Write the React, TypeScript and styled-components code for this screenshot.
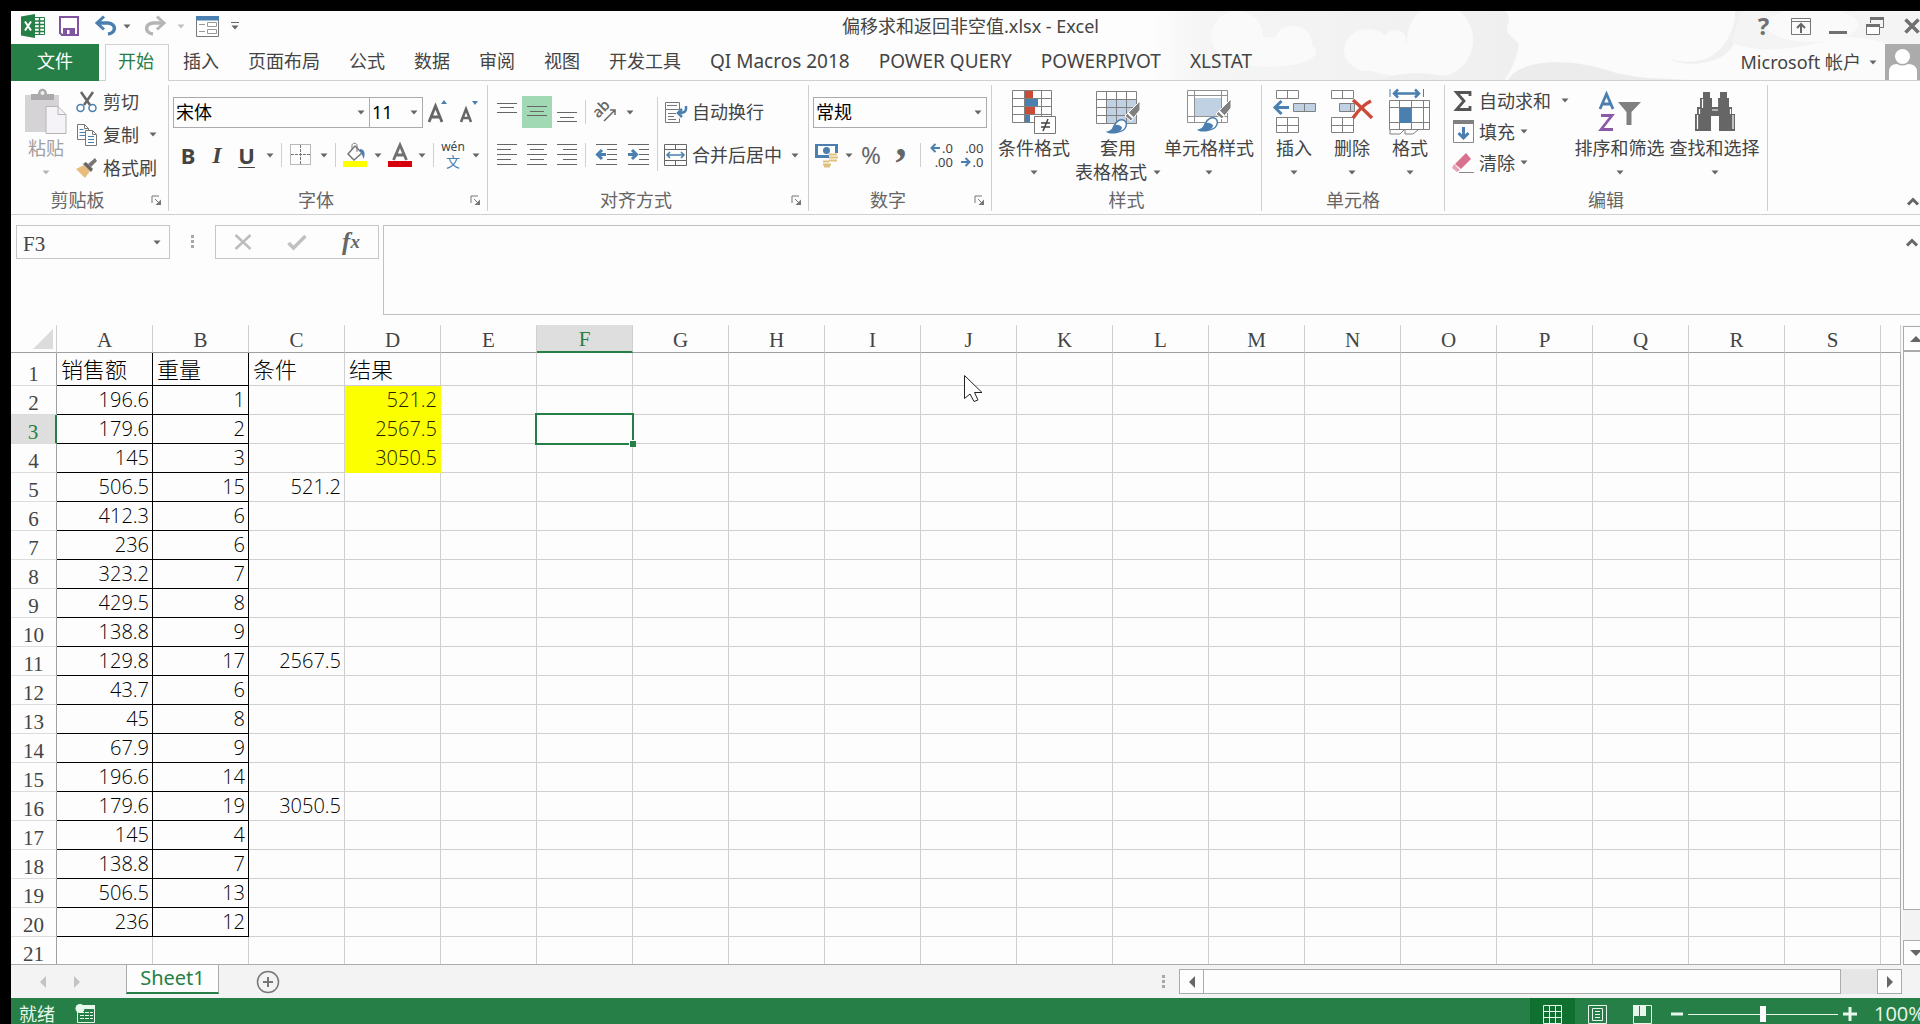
import React from 'react';
import styled, { createGlobalStyle, css } from 'styled-components';

const c = {
  green: '#267f46',
  greenDark: '#10702f',
  bg: '#fdfdfd',
  text: '#444444',
  label: '#666666',
  icon: '#707070',
  line: '#d0d0d0',
  box: '#ababab',
  blue: '#4a7fb0',
  pale: '#c0d1e4',
  red: '#cc4b37',
};
const uiFont = '"Noto Sans", "Noto Sans CJK SC", sans-serif';
const cellFont = '"Open Sans", "Noto Sans CJK SC", sans-serif';
const cellSerif = '"Liberation Serif", "Noto Sans CJK SC", serif';

const Global = createGlobalStyle`
  *, *::before, *::after { box-sizing: border-box; }
  body { margin: 0; background: #000; overflow: hidden; }
  button, input, select, textarea { font: inherit; color: inherit; }
`;

/* ---------- window ---------- */
const Screen = styled.div`
  height: 100vh;
  padding: 11px 0 0 11px;
  overflow: hidden;
  background: #000;
`;
const Window = styled.div`
  display: flex;
  flex-direction: column;
  width: calc(100% + 10px);
  height: calc(100% + 6px);
  background: ${c.bg};
  color: ${c.text};
  font: 18px/24px ${uiFont};
`;
const Plain = styled.button`
  display: flex;
  align-items: center;
  justify-content: center;
  padding: 0;
  border: 0;
  background: none;
  white-space: nowrap;
`;

/* ---------- header ---------- */
const Header = styled.header`
  position: relative;
  flex: none;
  isolation: isolate;
`;
const Art = styled.svg`
  position: absolute;
  top: 0;
  right: 0;
  z-index: -1;
`;
const TitleBar = styled.div`
  display: grid;
  grid-template-columns: 1fr auto 1fr;
  align-items: center;
  height: 33px;
  padding-bottom: 3px;
`;
const QuickBar = styled.div`
  display: flex;
  align-items: center;
  padding-left: 8px;
`;
const QuickButton = styled(Plain)<{ $w: number }>`
  width: ${(p) => p.$w}px;
  height: 30px;
`;
const Title = styled.h1`
  margin: 0;
  font: 18px/30px ${uiFont};
`;
const WindowControls = styled.div`
  display: flex;
  justify-content: flex-end;
`;
const WindowButton = styled(Plain)`
  width: 37px;
  height: 30px;
  color: ${c.icon};
  font-size: 24px;
  font-weight: 700;
`;
const TabBar = styled.nav`
  display: flex;
  height: 37px;
  border-bottom: 1px solid ${c.line};
`;
const FileTab = styled(Plain)`
  width: 88px;
  height: 37px;
  margin-right: 6px;
  padding-bottom: 4px;
  background: ${c.green};
  color: #fff;
`;
const Tab = styled(Plain)<{ $active?: boolean; $latin?: boolean }>`
  height: 37px;
  padding: 0 15px 4px 14px;
  font-size: ${(p) => (p.$latin ? 19 : 18)}px;
  ${(p) =>
    p.$active &&
    css`
      padding: 0 14px 4px 12px;
      background: ${c.bg};
      border: 1px solid ${c.line};
      border-bottom: 0;
      color: ${c.green};
    `}
`;
const Account = styled(Plain)`
  gap: 8px;
  margin-left: auto;
  margin-right: 9px;
`;
const Avatar = styled.span`
  display: flex;
  width: 36px;
  height: 36px;
  background: #ababab;
`;

/* ---------- ribbon ---------- */
const Ribbon = styled.div`
  display: flex;
  flex: none;
  height: 134px;
  padding: 4px 0 3px;
  border-bottom: 1px solid ${c.line};
`;
const GroupBox = styled.section<{ $w: number }>`
  display: flex;
  flex-direction: column;
  flex: none;
  width: ${(p) => p.$w}px;
  border-right: 1px solid ${c.line};
`;
const GroupBody = styled.div<{ $pad: number }>`
  display: flex;
  flex: 1;
  padding-left: ${(p) => p.$pad}px;
`;
const GroupFoot = styled.div`
  display: flex;
  align-items: center;
  height: 22px;
  color: ${c.label};
`;
const GroupName = styled.span`
  flex: 1;
  text-align: center;
`;
const LauncherButton = styled(Plain)`
  width: 24px;
  height: 20px;
`;
const Stack = styled.div<{ $w?: number }>`
  display: flex;
  flex-direction: column;
  width: ${(p) => (p.$w ? p.$w + 'px' : 'auto')};
`;
const TwoRows = styled.div`
  display: flex;
  flex-direction: column;
  gap: 11px;
  padding-top: 11px;
`;
const Row = styled.div`
  display: flex;
  align-items: center;
  height: 32px;
`;
const ToolButton = styled(Plain)<{ $w: number; $on?: boolean }>`
  flex: none;
  width: ${(p) => p.$w}px;
  height: 32px;
  background: ${(p) => (p.$on ? '#a0d9b4' : 'none')};
`;
const Letter = styled.span<{ $kind: 'b' | 'i' | 'u' | 'pct' | 'comma' }>`
  font-size: 22px;
  line-height: 24px;
  font-weight: 700;
  ${(p) => p.$kind === 'i' && css`font-family: "Liberation Serif", serif; font-style: italic; font-size: 24px;`}
  ${(p) => p.$kind === 'u' && css`text-decoration: underline; text-decoration-thickness: 1px; text-underline-offset: 3px;`}
  ${(p) => p.$kind === 'pct' && css`font-size: 24px; font-weight: 400; color: ${c.label};`}
  ${(p) => p.$kind === 'comma' && css`font-family: "Liberation Serif", serif; font-size: 44px; line-height: 12px; padding-bottom: 26px; color: ${c.label};`}
`;
const Divider = styled.span<{ $tall?: boolean }>`
  flex: none;
  width: 1px;
  height: ${(p) => (p.$tall ? 74 : 24)}px;
  margin: ${(p) => (p.$tall ? '12px 4px 0' : '0 4px 0 3px')};
  background: ${c.line};
`;
const Combo = styled.label<{ $w: number }>`
  position: relative;
  display: flex;
  align-items: center;
  width: ${(p) => p.$w}px;
  height: 31px;
  & + & { margin-left: -1px; }
  svg { position: absolute; right: 5px; pointer-events: none; }
`;
const ComboSelect = styled.select`
  appearance: none;
  width: 100%;
  height: 31px;
  padding: 0 2px;
  border: 1px solid ${c.box};
  border-radius: 0;
  background: ${c.bg};
  color: #000;
`;
const TextButton = styled(Plain)<{ $h: number; $gap?: number }>`
  justify-content: flex-start;
  gap: ${(p) => p.$gap ?? 3}px;
  height: ${(p) => p.$h}px;
`;
const IconSlot = styled.span<{ $w: number }>`
  display: flex;
  justify-content: center;
  width: ${(p) => p.$w}px;
`;
const CaretSlot = styled.span<{ $near?: boolean }>`
  display: flex;
  margin-left: ${(p) => (p.$near ? 2 : 7)}px;
`;
const BigBox = styled.button<{ $w: number; $dim?: boolean }>`
  display: flex;
  flex-direction: column;
  align-items: center;
  flex: none;
  width: ${(p) => p.$w}px;
  padding: 3px 0 0;
  border: 0;
  background: none;
  white-space: nowrap;
  color: ${(p) => (p.$dim ? '#a0a0a0' : 'inherit')};
`;
const BigIcon = styled.span`
  display: flex;
  align-items: center;
  height: 48px;
`;
const BigFoot = styled.span`
  display: flex;
  align-items: center;
  gap: 6px;
  height: 24px;
`;
const Pinyin = styled.span`
  display: flex;
  flex-direction: column;
  align-items: center;
  font-size: 12px;
  line-height: 14px;
`;
const PinyinHan = styled.span`
  font-size: 14px;
  line-height: 16px;
  color: ${c.blue};
`;
const Digits = styled.span`
  display: flex;
  flex-direction: column;
  width: 25px;
  font-size: 13px;
  line-height: 14px;
`;
const DigitRow = styled.span`
  display: flex;
  align-items: center;
  justify-content: flex-end;
  gap: 2px;
`;
const Collapse = styled(Plain)<{ $top?: boolean }>`
  align-self: ${(p) => (p.$top ? 'flex-start' : 'flex-end')};
  margin-left: auto;
  margin-top: ${(p) => (p.$top ? 6 : 0)}px;
  width: 35px;
  height: 20px;
`;

/* ---------- formula bar ---------- */
const FormulaBar = styled.div`
  display: flex;
  align-items: flex-start;
  flex: none;
  height: 110px;
  padding: 10px 0 0 5px;
`;
const NameBox = styled.label`
  position: relative;
  display: flex;
  align-items: center;
  width: 154px;
  svg { position: absolute; right: 9px; }
`;
const NameInput = styled.input`
  width: 100%;
  height: 34px;
  padding: 4px 6px 0;
  border: 1px solid #c6c6c6;
  background: ${c.bg};
  font: 21px/24px ${cellSerif};
`;
const Grip = styled.span<{ $margin: string }>`
  display: flex;
  flex-direction: column;
  gap: 2px;
  margin: ${(p) => p.$margin};
  &::before, &::after, i { content: ''; width: 3px; height: 3px; background: #a8a8a8; }
`;
const FormulaTools = styled.div`
  display: flex;
  width: 164px;
  height: 34px;
  margin-right: 4px;
  border: 1px solid #c6c6c6;
`;
const FormulaTool = styled(Plain)`
  flex: 1;
  font: italic 700 25px/24px "Liberation Serif", serif;
  color: ${c.label};
`;
const SmallX = styled.span`
  font-size: 19px;
`;
const FormulaField = styled.div`
  display: flex;
  flex: 1;
  height: 90px;
  border: 1px solid #c0c0c0;
`;
const FormulaInput = styled.textarea`
  flex: 1;
  border: 0;
  padding: 4px;
  resize: none;
  background: none;
  outline: none;
`;

/* ---------- sheet ---------- */
const SheetArea = styled.div`
  display: flex;
  flex: 1;
  min-height: 0;
  background: #f8f8f8;
`;
const GridBox = styled.div`
  position: relative;
  flex: 1;
  overflow: hidden;
  background: ${c.bg};
  border-bottom: 1px solid ${c.box};
`;
const Grid = styled.table`
  width: 100%;
  table-layout: fixed;
  border-collapse: separate;
  border-spacing: 0;
`;
const HeadCol = styled.col`width: 46px;`;
const DataCol = styled.col`width: 96px;`;
const ColHead = styled.th<{ $on?: boolean }>`
  height: 28px;
  padding: 3px 0 0;
  border-right: 1px solid ${c.line};
  border-bottom: 1px solid #a0a0a0;
  font: 21px/24px ${cellSerif};
  ${(p) => p.$on && css`background: #dedede; color: ${c.green}; border-bottom: 2px solid ${c.green}; line-height: 23px;`}
`;
const Corner = styled.th`
  height: 28px;
  padding: 0 3px 3px 0;
  border-right: 1px solid ${c.line};
  border-bottom: 1px solid #a0a0a0;
  vertical-align: bottom;
  svg { display: block; margin-left: auto; }
`;
const RowHead = styled.th<{ $on?: boolean; $tall?: boolean }>`
  height: ${(p) => (p.$tall ? 33 : 29)}px;
  padding: 0;
  border-right: 1px solid #a0a0a0;
  border-bottom: 1px solid #dcdcdc;
  vertical-align: bottom;
  font: 21px/22px ${cellSerif};
  ${(p) => p.$on && css`background: #dedede; color: ${c.green}; border-right: 2px solid ${c.green};`}
`;
const Cell = styled.td<{ $boxed: boolean; $fill: boolean; $text: boolean; $edge: boolean }>`
  position: relative;
  padding: ${(p) => (p.$text ? '0 4px' : '0 3px')};
  border-right: 1px solid ${(p) => (p.$boxed ? '#000' : p.$fill ? '#fbff00' : p.$edge ? c.box : c.line)};
  border-bottom: 1px solid ${(p) => (p.$boxed ? '#000' : p.$fill ? '#fbff00' : c.line)};
  background: ${(p) => (p.$fill ? '#fbff00' : 'none')};
  color: ${(p) => (p.$fill ? '#222200' : '#000')};
  text-align: ${(p) => (p.$text ? 'left' : 'right')};
  font-family: ${cellFont};
  font-weight: 300;
  font-size: ${(p) => (p.$text ? 22 : 20)}px;
  line-height: 26px;
  white-space: nowrap;
`;
const Selection = styled.span`
  position: absolute;
  inset: -2px;
  z-index: 1;
  border: 2px solid ${c.green};
  &::after {
    content: '';
    position: absolute;
    right: -4px;
    bottom: -4px;
    width: 7px;
    height: 7px;
    background: ${c.green};
    border: solid ${c.bg};
    border-width: 1px 0 0 1px;
  }
`;
const Pointer = styled.svg`
  position: absolute;
  left: 953px;
  top: 50px;
`;
const VScroll = styled.div`
  display: flex;
  flex-direction: column;
  flex: none;
  width: 25px;
  margin: 1px 2px 0;
`;
const ScrollButton = styled(Plain)`
  flex: none;
  width: 25px;
  height: 25px;
  border: 1px solid ${c.box};
  background: ${c.bg};
`;
const VThumb = styled.div`
  flex: 1;
  border: 1px solid ${c.box};
  background: ${c.bg};
`;
const VTrack = styled.div`
  height: 30px;
  background: #f3f3f3;
`;

/* ---------- sheet tabs ---------- */
const SheetBar = styled.div`
  display: flex;
  align-items: center;
  flex: none;
  height: 33px;
  background: #f3f3f3;
`;
const SheetNav = styled.div`
  display: flex;
  width: 115px;
  padding-left: 15px;
`;
const NavButton = styled(Plain)`
  width: 34px;
  height: 28px;
`;
const SheetTab = styled(Plain)`
  align-self: flex-start;
  width: 93px;
  height: 29px;
  padding-bottom: 2px;
  border: solid ${c.box};
  border-width: 0 1px;
  border-bottom: 2px solid ${c.green};
  background: ${c.bg};
  color: ${c.green};
  font-size: 20px;
`;
const AddSheet = styled(Plain)`
  width: 98px;
  height: 30px;
`;
const HScroll = styled.div`
  display: flex;
  flex: 0 0 40%;
  align-items: center;
  margin-left: auto;
  padding-right: 28px;
`;
const HThumb = styled.div`
  flex: 1;
  height: 25px;
  margin-left: -1px;
  border: 1px solid ${c.box};
  background: ${c.bg};
`;
const HTrack = styled.div`
  width: 36px;
  height: 25px;
  background: #e6e6e6;
`;

/* ---------- status bar ---------- */
const StatusBar = styled.footer`
  display: flex;
  align-items: center;
  flex: none;
  height: 32px;
  padding-left: 8px;
  background: ${c.green};
  color: #e8f7ec;
`;
const MacroButton = styled(Plain)`
  margin-left: 20px;
`;
const ViewButton = styled(Plain)<{ $on?: boolean }>`
  width: 45px;
  height: 32px;
  background: ${(p) => (p.$on ? c.greenDark : 'none')};
`;
const Views = styled.div`
  display: flex;
  margin-left: auto;
`;
const ZoomButton = styled(Plain)`
  width: 23px;
  height: 32px;
`;
const ZoomRange = styled.input`
  appearance: none;
  width: 150px;
  height: 16px;
  margin: 0;
  background: linear-gradient(#e8f7ec, #e8f7ec) center / 100% 1px no-repeat;
  &::-webkit-slider-thumb { appearance: none; width: 6px; height: 16px; background: #fff; }
`;
const ZoomValue = styled.span`
  width: 56px;
  margin-left: 13px;
  font-family: ${cellFont};
  font-size: 20px;
`;

/* ---------- icons ---------- */
const Svg = ({ w, h, children }: { w: number; h: number; children: React.ReactNode }) => (
  <svg width={w} height={h} viewBox={`0 0 ${w} ${h}`} fill="none" overflow="visible" aria-hidden="true">{children}</svg>
);
const Caret = ({ color = '#666' }: { color?: string }) => (
  <Svg w={8} h={5}><path d="M0.500 0.500h7L4 4.500z" fill={color} /></Svg>
);
const Chevron = () => (
  <Svg w={12} h={9}><path d="M1 7.500L6 2.500l5 5" stroke="#666" strokeWidth="3" /></Svg>
);
const Launcher = () => (
  <Svg w={11} h={11}>
    <path d="M1 8V1h7" stroke="#777" /><path d="M4 4l4 4" stroke="#777" /><path d="M10 4.500V10H4.500z" fill="#777" />
  </Svg>
);
const Tri = ({ dir, color = '#666' }: { dir: 'l' | 'r' | 'u' | 'd'; color?: string }) => (
  <Svg w={12} h={12}>
    <path fill={color} d={{ l: 'M9 0v12L3 6z', r: 'M3 0v12l6-6z', u: 'M0 9h12L6 3z', d: 'M0 3h12L6 9z' }[dir]} />
  </Svg>
);
const ExcelLogo = () => (
  <Svg w={24} h={24}>
    <path d="M13 3.500h10.500v17H13" fill="#fff" stroke={c.green} />
    <path d="M14 7h9M14 10.500h9M14 14h9M14 17.500h9M18.500 4v16" stroke={c.green} strokeWidth="1.500" />
    <path d="M0 2.500L14 0v24L0 21.500z" fill={c.green} />
    <path d="M4 7.500l6 9M10 7.500l-6 9" stroke="#fff" strokeWidth="2" />
  </Svg>
);
const SaveIcon = () => (
  <Svg w={20} h={20}>
    <path d="M1 1h18v18H3l-2-2z" stroke="#8054a0" strokeWidth="2" fill="#fff" />
    <path d="M4 12h12v7H4z" fill="#8054a0" /><path d="M8 14h2.500v4H8z" fill="#fff" />
  </Svg>
);
const UndoIcon = ({ color, flip }: { color: string; flip?: boolean }) => (
  <Svg w={22} h={20}>
    <g transform={flip ? 'matrix(-1 0 0 1 22 0)' : undefined} stroke={color}>
      <path d="M3 7h10c9 1 8 10 0 11" strokeWidth="3.500" />
      <path d="M9 0.500L2 7l7 6.500" strokeWidth="3" />
    </g>
  </Svg>
);
const FormIcon = () => (
  <Svg w={23} h={21}>
    <path d="M0.500 0.500h22v20h-22z" fill="#fff" stroke="#777" /><path d="M0 0h23v4.500H0z" fill={c.blue} />
    <path d="M3 8.500h6M3 15.500h6M11.500 6.500h9v4h-9zM11.500 13.500h9v4h-9z" stroke="#999" />
  </Svg>
);
const PasteIcon = () => (
  <Svg w={42} h={46}>
    <path d="M0 6h34v37H0z" fill="#d6d3d6" />
    <path d="M6 5h7c0-7 9-7 9 0h7v6H6z" fill="#aaa" /><circle cx="17.500" cy="4" r="2" fill="#eee" />
    <path d="M21 17.500h12l8 8v19H21z" fill="#f5f3f8" stroke="#b5b5b5" /><path d="M33 17.500v8h8" stroke="#b5b5b5" />
  </Svg>
);
const CutIcon = () => (
  <Svg w={22} h={22}>
    <path d="M5 1l9 13M17 1L8 14" stroke="#666" strokeWidth="2.500" />
    <circle cx="4.500" cy="17" r="3.500" stroke={c.blue} strokeWidth="1.500" /><circle cx="16.500" cy="17" r="3.500" stroke={c.blue} strokeWidth="1.500" />
  </Svg>
);
const CopyIcon = () => (
  <Svg w={22} h={23}>
    <path d="M1.500 1.500h7l4 4v11h-11z" fill="#fff" stroke="#777" /><path d="M8.500 1.500v4h4" stroke="#777" /><path d="M3.500 6.500h4M3.500 9.500h6M3.500 12.500h6" stroke={c.blue} />
    <path d="M9.500 7.500h7l4 4v11h-11z" fill="#fff" stroke="#777" /><path d="M16.500 7.500v4h4" stroke="#777" /><path d="M12 13.500h6M12 16.500h6M12 19.500h6" stroke={c.blue} />
  </Svg>
);
const BrushIcon = () => (
  <Svg w={22} h={21}>
    <path d="M0 12l8-4 6 6-5 7z" fill="#e8bd7c" /><path d="M7 7l3-2 7 7-2 3z" fill="#666" />
    <path d="M12 7l7-6 2 3-6 6z" fill="#777" />
  </Svg>
);
const GrowA = ({ up }: { up: boolean }) => (
  <Svg w={24} h={28}>
    {up ? <path d="M2 24L8.500 8l6.500 16M4.500 19h8" stroke="#666" strokeWidth="2.800" /> : <path d="M4 24l5-13 5 13M6 20h6.500" stroke="#666" strokeWidth="2.500" />}
    <path d={up ? 'M14 6h6l-3-4z' : 'M15 3h6l-3 4z'} fill={c.blue} />
  </Svg>
);
const BordersIcon = () => (
  <Svg w={22} h={22}>
    <path d="M0.500 0.500h20v20h-20z" stroke="#777" strokeDasharray="1 1" /><path d="M10.500 1v19M1 10.500h19" stroke="#777" strokeDasharray="3 1" />
  </Svg>
);
const FillIcon = () => (
  <Svg w={24} h={24}>
    <path d="M12 3l7 7-8 7-6-6z" stroke="#777" strokeWidth="1.500" fill="#fff" /><path d="M9 6V2.500c0-3 5-3 5 0V9" stroke="#777" />
    <path d="M17 6c4 0 6 4 3.500 10C19 12 19 10 17 8z" fill={c.blue} /><path d="M0 18h24v6H0z" fill="#ffff00" />
  </Svg>
);
const FontColorIcon = () => (
  <Svg w={24} h={24}>
    <path d="M5.500 17L12 2l6.500 15M8 12h8" stroke="#707070" strokeWidth="2.800" /><path d="M0 18h24v6H0z" fill="#d9000d" />
  </Svg>
);
const Lines = ({ rows }: { rows: [number, number, number][] }) => (
  <Svg w={22} h={24}>
    <path stroke="#666" d={rows.map(([x, y, w]) => `M${x} ${y}.5h${w}`).join('')} />
  </Svg>
);
const five = (short: number) => [1, 6, 11, 16, 21].map((y, i) => [i % 2 ? short : 1, y, i % 2 ? 14 : 20] as [number, number, number]);
const OrientIcon = () => (
  <Svg w={22} h={22}>
    <text x="0" y="14" transform="rotate(-45 6 12)" fontFamily="Open Sans" fontSize="15" fontWeight="600" fill="#666">ab</text>
    <path d="M9 20L20 9M15 9h5v5" stroke="#666" strokeWidth="1.500" />
  </Svg>
);
const IndentIcon = ({ out }: { out?: boolean }) => (
  <Svg w={23} h={24}>
    <path d="M1 1.500h21M12 6.500h10M12 11.500h10M12 16.500h10M1 21.500h21" stroke="#666" />
    <path d={out ? 'M11 11.500H3M7 7L2.500 11.500 7 16' : 'M1 11.500h8M5 7l4.500 4.500L5 16'} stroke={c.blue} strokeWidth="3" />
  </Svg>
);
const WrapIcon = () => (
  <Svg w={24} h={23}>
    <path d="M1.500 1.500h14v7h-14zM1.500 8.500v13h14v-4M3 4.500h10M4 12.500h8M4 15.500h6M4 18.500h8" stroke="#777" />
    <path d="M22 5v3q0 4-7 4M18 8l-4 4 4 4" stroke={c.blue} strokeWidth="2.500" />
  </Svg>
);
const MergeIcon = () => (
  <Svg w={24} h={24}>
    <path d="M0.500 1.500h22v21h-22zM0.500 6.500h22M0.500 17.500h22M11.500 1.500v5M11.500 17.500v5" stroke="#666" />
    <path d="M3 12h17M6 9l-3 3 3 3M17 9l3 3-3 3" stroke={c.blue} strokeWidth="1.500" />
  </Svg>
);
const CurrencyIcon = () => (
  <Svg w={24} h={23}>
    <path d="M0 0h23v14H0z" fill={c.blue} /><path d="M3 2h17v9H3z" fill="#fff" /><circle cx="11.500" cy="6.500" r="3.500" fill={c.blue} />
    <path d="M14 9h10v9H14zM8 16h9v7H8z" fill="#fff" />
    <path d="M14 10.500h8M14 13.500h9M14 16.500h8M8 17.500h6M8 20.500h8M9 22.500h6" stroke="#dfc07c" strokeWidth="1.800" />
  </Svg>
);
const DecArrow = ({ right }: { right?: boolean }) => (
  <Svg w={10} h={10}><path d={right ? 'M0 5h8M4.500 1L8.500 5l-4 4' : 'M10 5H2M5.500 1L1.500 5l4 4'} stroke={c.blue} strokeWidth="2" /></Svg>
);
const Decimal = ({ less }: { less?: boolean }) => (
  <Digits>
    <DigitRow>{less ? '.00' : <><DecArrow />.0</>}</DigitRow>
    <DigitRow>{less ? <><DecArrow right />.0</> : '.00'}</DigitRow>
  </Digits>
);
const CondIcon = () => (
  <Svg w={45} h={46}>
    <path d="M0.500 1.500h39v32h-39zM0.500 9.500h39M0.500 17.500h39M0.500 25.500h39M12.500 1.500v32M29.500 1.500v32" stroke="#808080" fill="#fff" />
    <path d="M13 2h8v7h-8zM13 18h10v7H13z" fill={c.red} /><path d="M13 10h13v7H13zM13 26h5v7h-5z" fill={c.blue} />
    <path d="M22.500 27.500h21v17h-21z" fill="#fff" stroke="#777" /><path d="M29 34h9M29 38h9M36 30l-5 12" stroke="#444" strokeWidth="1.500" />
  </Svg>
);
const Brush = () => (
  <g>
    <path d="M44 10v9L35 30l-6-5z" fill="#808080" stroke="#fff" /><path d="M32 22l5 5" stroke="#fff" strokeWidth="2" />
    <path d="M29 30c3 3 1 10-7 11-4 1-8 1-10 0 4-1 5-3 6-6 2-5 7-8 11-5z" fill="#fff" stroke={c.blue} strokeWidth="1.500" />
    <path d="M12 41c4-1 5-3 6-6q3-3 8 1c0 6-9 6-14 5z" fill={c.blue} />
  </g>
);
const TableStyleIcon = () => (
  <Svg w={45} h={42}>
    <path d="M0.500 0.500h40v32h-40z" fill="#fff" /><path d="M10 8h31v25H10z" fill={c.pale} />
    <path d="M0.500 0.500h40v32h-40zM0.500 8.500h40M0.500 16.500h40M0.500 24.500h40M10.500 0.500v32M20.500 0.500v32M30.500 0.500v32" stroke="#808080" />
    <Brush />
  </Svg>
);
const CellStyleIcon = () => (
  <Svg w={45} h={46}>
    <path d="M0.500 1.500h40v32h-40zM0.500 6.500h40M0.500 27.500h40M7.500 1.500v32M34.500 1.500v32" fill="#fff" stroke="#909090" />
    <path d="M8 9h26v18H8z" fill={c.pale} /><Brush />
  </Svg>
);
const InsertIcon = () => (
  <Svg w={43} h={44}>
    <path d="M3.500 0.500h22v8h-22zM14.500 0.500v8M3.500 27.500h22v15h-22zM3.500 35.500h22M14.500 27.500v15" stroke="#808080" fill="#fff" />
    <path d="M20.500 13.500h22v8h-22zM31.500 13.500v8" fill={c.pale} stroke="#808080" />
    <path d="M16 17.500H3M8.500 11L2 17.500 8.500 24" stroke={c.blue} strokeWidth="3" />
  </Svg>
);
const DeleteIcon = () => (
  <Svg w={43} h={44}>
    <path d="M0.500 0.500h22v8h-22zM11.500 0.500v8M0.500 27.500h22v15h-22zM0.500 35.500h22M11.500 27.500v15" stroke="#808080" fill="#fff" />
    <path d="M8.500 13.500h15v8h-15zM19.500 13.500v8" fill={c.pale} stroke="#808080" />
    <path d="M22 10q7 6 19 18M40 11Q31 15 22 28" stroke={c.red} strokeWidth="3.500" />
  </Svg>
);
const FormatIcon = () => (
  <Svg w={42} h={46}>
    <path d="M1 0v8M34.500 0v8" stroke={c.blue} /><path d="M5 4.500h25M9 0.500l-4 4 4 4M26 0.500l4 4-4 4" stroke={c.blue} strokeWidth="2.500" />
    <path d="M0.500 11.500h40v29h-40zM0.500 18.500h40M0.500 33.500h40M10.500 11.500v29M22.500 11.500v29M34.500 11.500v29" stroke="#808080" fill="#fff" />
    <path d="M11 19h11v15H11z" fill={c.blue} /><path d="M1 41v4h10l4-4M16 41v4h8l5-4" stroke="#808080" />
  </Svg>
);
const SumIcon = () => (
  <Svg w={18} h={20}><path d="M16 5V1.500H2.500L10 10l-7.500 8.500H16V15" stroke="#555" strokeWidth="2.800" /></Svg>
);
const FillDownIcon = () => (
  <Svg w={21} h={23}>
    <path d="M0.500 0.500h20v22h-20z" fill="#fff" stroke="#888" /><path d="M0 0h21v4H0z" fill="#808080" />
    <path d="M10.500 7v11M5.500 13l5 5 5-5" stroke={c.blue} strokeWidth="3" />
  </Svg>
);
const EraserIcon = () => (
  <Svg w={22} h={20}>
    <path d="M14 0l5 6L9 16l-6-5z" fill="#d9708e" /><path d="M2 11l6 6-3 2-5-4z" fill="#e7a3b5" /><path d="M7 19.500h15" stroke="#888" />
  </Svg>
);
const SortIcon = () => (
  <Svg w={42} h={40}>
    <path d="M1 17L7.500 2 14 17M3.500 12h8" stroke={c.blue} strokeWidth="2.800" />
    <path d="M2 23.500h11L2 37.500h12" stroke="#8a5aa8" strokeWidth="2.800" />
    <path d="M19 10h23L32.500 20v13h-5V20z" fill="#808080" />
  </Svg>
);
const FindIcon = () => (
  <Svg w={42} h={40}>
    <path fill="#666" d="M9 0h7v6h2v9h6V6h2V0h7v6h2v9h3v7h3v17H25V24h-8v15H1V22h2v-7h3V6h3z" />
    <path d="M8.500 7v9M5.500 17v5M3.500 23v14M23.500 8v7M36.500 17v5M39 23v14M18 18h6" stroke="#fff" strokeWidth="1.200" />
  </Svg>
);

/* ---------- pieces ---------- */
function Group({ name, w, pad = 0, launcher, children }: { name: string; w: number; pad?: number; launcher?: boolean; children: React.ReactNode }) {
  return (
    <GroupBox $w={w} aria-label={name}>
      <GroupBody $pad={pad}>{children}</GroupBody>
      <GroupFoot>
        <GroupName>{name}</GroupName>
        {launcher && <LauncherButton aria-label={name + '设置'}><Launcher /></LauncherButton>}
      </GroupFoot>
    </GroupBox>
  );
}
function Big({ w, icon, label, second, dim }: { w: number; icon: React.ReactNode; label: string; second?: string; dim?: boolean }) {
  return (
    <BigBox $w={w} $dim={dim}>
      <BigIcon>{icon}</BigIcon>
      <span>{label}</span>
      <BigFoot>{second}<Caret color={dim ? '#b5b5b5' : undefined} /></BigFoot>
    </BigBox>
  );
}
function Small({ icon, label, h, w = 26, caret, near, gap }: { icon: React.ReactNode; label: string; h: number; w?: number; caret?: boolean; near?: boolean; gap?: number }) {
  return (
    <TextButton $h={h} $gap={gap}>
      <IconSlot $w={w}>{icon}</IconSlot>
      {label}
      {caret && <CaretSlot $near={near}><Caret /></CaretSlot>}
    </TextButton>
  );
}
const Drop = ({ label }: { label: string }) => <ToolButton $w={16} aria-label={label}><Caret /></ToolButton>;

const tabs = ['插入', '页面布局', '公式', '数据', '审阅', '视图', '开发工具'];
const addInTabs = ['QI Macros 2018', 'POWER QUERY', 'POWERPIVOT', 'XLSTAT'];
const columns = 'ABCDEFGHIJKLMNOPQRS'.split('');
const sales = ['196.6', '179.6', '145', '506.5', '412.3', '236', '323.2', '429.5', '138.8', '129.8', '43.7', '45', '67.9', '196.6', '179.6', '145', '138.8', '506.5', '236'];
const weights = [1, 2, 3, 15, 6, 6, 7, 8, 9, 17, 6, 8, 9, 14, 19, 4, 7, 13, 12];
const extra: Record<string, string> = {
  A1: '销售额', B1: '重量', C1: '条件', D1: '结果',
  C5: '521.2', C11: '2567.5', C16: '3050.5',
  D2: '521.2', D3: '2567.5', D4: '3050.5',
};
function valueAt(col: string, row: number) {
  const k = col + row;
  if (extra[k]) return extra[k];
  if (col === 'A') return sales[row - 2];
  if (col === 'B') return weights[row - 2];
  return undefined;
}

function HeaderArt() {
  return (
    <Art width="780" height="69" viewBox="1150 11 780 69" aria-hidden="true">
      <defs>
        <linearGradient id="fade"><stop offset="0" stopColor="#f4f4f4" stopOpacity="0" /><stop offset="0.15" stopColor="#f5f5f5" /><stop offset="1" stopColor="#efefef" /></linearGradient>
      </defs>
      <path d="M1150 11h370v69h-370z" fill="url(#fade)" />
      <g fill="#fafafa">
        <ellipse cx="1237" cy="36" rx="26" ry="25" /><ellipse cx="1293" cy="43" rx="19" ry="17" /><ellipse cx="1270" cy="52" rx="46" ry="15" />
        <ellipse cx="1440" cy="40" rx="33" ry="36" /><ellipse cx="1368" cy="50" rx="24" ry="21" /><ellipse cx="1395" cy="40" rx="11" ry="10" /><ellipse cx="1412" cy="60" rx="52" ry="17" />
      </g>
      <path d="M1505 11c10 8-4 17 6 25l8 8c-2 14-6 22-14 36h425V11z" fill="#fbfbfb" />
      <path d="M1508 80c10-20 60-24 105-8 30 8 50 6 75 8z" fill="#ececec" />
      <path d="M1380 80c18-8 50-10 78 0z" fill="#efefef" />
      <path d="M1735 11c2 18-14 44-30 48-14 4-24 3-36 0 14 8 44 6 58-6 10-10 14-26 20-42z" fill="#f0f0f0" />
      <path d="M1740 11h190v34c-40 6-70-14-96-6-40 10-70 16-102 4z" fill="#f4f4f4" />
      <ellipse cx="1812" cy="25" rx="46" ry="17" fill="#fafafa" />
    </Art>
  );
}

export default function App() {
  return (
    <Screen>
      <Global />
      <Window>
        <Header>
          <HeaderArt />
          <TitleBar>
            <QuickBar>
              <QuickButton $w={28} aria-label="Excel"><ExcelLogo /></QuickButton>
              <QuickButton $w={44} aria-label="保存"><SaveIcon /></QuickButton>
              <QuickButton $w={30} aria-label="撤消"><UndoIcon color={c.blue} /></QuickButton>
              <QuickButton $w={12} aria-label="撤消列表"><Caret /></QuickButton>
              <QuickButton $w={44} aria-label="恢复"><UndoIcon color="#b5b5b5" flip /></QuickButton>
              <QuickButton $w={8} aria-label="恢复列表"><Caret color="#c0c0c0" /></QuickButton>
              <QuickButton $w={44} aria-label="记录单"><FormIcon /></QuickButton>
              <QuickButton $w={12} aria-label="自定义快速访问工具栏"><Svg w={8} h={8}><path d="M0 0.500h8" stroke="#666" /><path d="M0.500 3.500h7L4 7.500z" fill="#666" /></Svg></QuickButton>
            </QuickBar>
            <Title>偏移求和返回非空值.xlsx - Excel</Title>
            <WindowControls>
              <WindowButton aria-label="帮助">?</WindowButton>
              <WindowButton aria-label="功能区显示选项"><Svg w={20} h={17}><path d="M0.500 0.500h19v16h-19zM0.500 3.500h19" stroke="#777" /><path d="M10 15V7M6 10l4-4 4 4" stroke="#666" strokeWidth="2" /></Svg></WindowButton>
              <WindowButton aria-label="最小化"><Svg w={18} h={16}><path d="M0 13h18v3H0z" fill={c.icon} /></Svg></WindowButton>
              <WindowButton aria-label="还原"><Svg w={18} h={18}><path d="M4.500 6V1.500h13v9H13" stroke={c.icon} /><path d="M4 1.500h14" stroke={c.icon} strokeWidth="3" /><path d="M0.500 7.500h13v10H0.500z" fill="#fff" stroke={c.icon} /><path d="M0 8.500h14" stroke={c.icon} strokeWidth="3" /></Svg></WindowButton>
              <WindowButton aria-label="关闭"><Svg w={16} h={16}><path d="M1.500 1.500l13 13M14.500 1.500l-13 13" stroke={c.icon} strokeWidth="3.500" /></Svg></WindowButton>
            </WindowControls>
          </TitleBar>
          <TabBar>
            <FileTab>文件</FileTab>
            <Tab $active>开始</Tab>
            {tabs.map((t) => <Tab key={t}>{t}</Tab>)}
            {addInTabs.map((t) => <Tab key={t} $latin>{t}</Tab>)}
            <Account>Microsoft 帐户<Caret />
              <Avatar><Svg w={36} h={36}><circle cx="17.500" cy="12.500" r="7.500" fill="#fff" /><path d="M4 36V28q0-8 8-8 5 3 11 0 9 0 9 8v8z" fill="#fff" /></Svg></Avatar>
            </Account>
          </TabBar>
        </Header>

        <Ribbon>
          <Group name="剪贴板" w={158} pad={7} launcher>
            <Big w={56} dim icon={<PasteIcon />} label="粘贴" />
            <Stack>
              <Small h={33} icon={<CutIcon />} label="剪切" />
              <Small h={33} icon={<CopyIcon />} label="复制" caret />
              <Small h={33} icon={<BrushIcon />} label="格式刷" />
            </Stack>
          </Group>
          <Group name="字体" w={319} pad={4} launcher>
            <TwoRows>
              <Row>
                <Combo $w={197}><ComboSelect aria-label="字体名称"><option>宋体</option></ComboSelect><Caret /></Combo>
                <Combo $w={54}><ComboSelect aria-label="字号"><option>11</option></ComboSelect><Caret /></Combo>
                <ToolButton $w={32} aria-label="增大字号"><GrowA up /></ToolButton>
                <ToolButton $w={28} aria-label="减小字号"><GrowA up={false} /></ToolButton>
              </Row>
              <Row>
                <ToolButton $w={30} aria-label="加粗"><Letter $kind="b">B</Letter></ToolButton>
                <ToolButton $w={28} aria-label="倾斜"><Letter $kind="i">I</Letter></ToolButton>
                <ToolButton $w={31} aria-label="下划线"><Letter $kind="u">U</Letter></ToolButton>
                <Drop label="下划线样式" /><Divider />
                <ToolButton $w={30} aria-label="边框"><BordersIcon /></ToolButton><Drop label="边框样式" /><Divider />
                <ToolButton $w={30} aria-label="填充颜色"><FillIcon /></ToolButton><Drop label="填充颜色列表" />
                <ToolButton $w={28} aria-label="字体颜色"><FontColorIcon /></ToolButton><Drop label="字体颜色列表" /><Divider />
                <ToolButton $w={30} aria-label="拼音"><Pinyin>wén<PinyinHan>文</PinyinHan></Pinyin></ToolButton><Drop label="拼音选项" />
              </Row>
            </TwoRows>
          </Group>
          <Group name="对齐方式" w={321} pad={4} launcher>
            <TwoRows>
              <Row>
                <ToolButton $w={30} aria-label="顶端对齐"><Lines rows={[[1, 3, 20], [4, 7, 14], [1, 12, 20]]} /></ToolButton>
                <ToolButton $w={30} $on aria-label="垂直居中"><Lines rows={[[1, 6, 20], [4, 11, 14], [1, 15, 20]]} /></ToolButton>
                <ToolButton $w={30} aria-label="底端对齐"><Lines rows={[[1, 12, 20], [4, 17, 14], [1, 21, 20]]} /></ToolButton>
                <Divider />
                <ToolButton $w={32} aria-label="方向"><OrientIcon /></ToolButton><Drop label="方向选项" />
              </Row>
              <Row>
                <ToolButton $w={30} aria-label="左对齐"><Lines rows={five(1)} /></ToolButton>
                <ToolButton $w={30} aria-label="居中"><Lines rows={five(4)} /></ToolButton>
                <ToolButton $w={30} aria-label="右对齐"><Lines rows={five(7)} /></ToolButton>
                <Divider />
                <ToolButton $w={33} aria-label="减少缩进量"><IndentIcon out /></ToolButton>
                <ToolButton $w={30} aria-label="增加缩进量"><IndentIcon /></ToolButton>
              </Row>
            </TwoRows>
            <Divider $tall />
            <TwoRows>
              <Small h={32} w={28} gap={2} icon={<WrapIcon />} label="自动换行" />
              <Small h={32} w={28} gap={2} icon={<MergeIcon />} label="合并后居中" caret />
            </TwoRows>
          </Group>
          <Group name="数字" w={183} pad={4} launcher>
            <TwoRows>
              <Row><Combo $w={174}><ComboSelect aria-label="数字格式"><option>常规</option></ComboSelect><Caret /></Combo></Row>
              <Row>
                <ToolButton $w={28} aria-label="会计数字格式"><CurrencyIcon /></ToolButton><Drop label="货币列表" />
                <ToolButton $w={28} aria-label="百分比样式"><Letter $kind="pct">%</Letter></ToolButton>
                <ToolButton $w={32} aria-label="千位分隔样式"><Letter $kind="comma">,</Letter></ToolButton>
                <Divider />
                <ToolButton $w={31} aria-label="增加小数位数"><Decimal /></ToolButton>
                <ToolButton $w={30} aria-label="减少小数位数"><Decimal less /></ToolButton>
              </Row>
            </TwoRows>
          </Group>
          <Group name="样式" w={270} pad={3}>
            <Big w={78} icon={<CondIcon />} label="条件格式" />
            <Big w={90} icon={<TableStyleIcon />} label="套用" second="表格格式" />
            <Big w={92} icon={<CellStyleIcon />} label="单元格样式" />
          </Group>
          <Group name="单元格" w={183} pad={3}>
            <Big w={58} icon={<InsertIcon />} label="插入" />
            <Big w={58} icon={<DeleteIcon />} label="删除" />
            <Big w={58} icon={<FormatIcon />} label="格式" />
          </Group>
          <Group name="编辑" w={323} pad={5}>
            <Stack $w={122}>
              <Small h={31} icon={<SumIcon />} label="自动求和" caret />
              <Small h={31} icon={<FillDownIcon />} label="填充" caret near />
              <Small h={31} icon={<EraserIcon />} label="清除" caret near />
            </Stack>
            <Big w={95} icon={<SortIcon />} label="排序和筛选" />
            <Big w={95} icon={<FindIcon />} label="查找和选择" />
          </Group>
          <Collapse aria-label="折叠功能区"><Chevron /></Collapse>
        </Ribbon>

        <FormulaBar>
          <NameBox><NameInput aria-label="名称框" defaultValue="F3" /><Caret /></NameBox>
          <Grip $margin="10px 21px 0"><i /></Grip>
          <FormulaTools>
            <FormulaTool aria-label="取消"><Svg w={18} h={16}><path d="M1.500 1l15 14M16.500 1l-15 14" stroke="#bdbdbd" strokeWidth="2.500" /></Svg></FormulaTool>
            <FormulaTool aria-label="输入"><Svg w={20} h={16}><path d="M1.500 9l5 5L18.500 2" stroke="#c0c0c0" strokeWidth="3.500" /></Svg></FormulaTool>
            <FormulaTool aria-label="插入函数">f<SmallX>x</SmallX></FormulaTool>
          </FormulaTools>
          <FormulaField>
            <FormulaInput aria-label="编辑栏" />
            <Collapse $top aria-label="折叠编辑栏"><Chevron /></Collapse>
          </FormulaField>
        </FormulaBar>

        <SheetArea>
          <GridBox>
            <Grid>
              <colgroup>
                <HeadCol />
                {columns.map((k) => <DataCol key={k} />)}
                <col />
              </colgroup>
              <thead>
                <tr>
                  <Corner><Svg w={20} h={20}><path d="M20 0v20H0z" fill="#dcdcdc" /></Svg></Corner>
                  {columns.map((k) => <ColHead key={k} $on={k === 'F'}>{k}</ColHead>)}
                  <ColHead />
                </tr>
              </thead>
              <tbody>
                {Array.from({ length: 21 }, (_, i) => i + 1).map((r) => (
                  <tr key={r}>
                    <RowHead $tall={r === 1} $on={r === 3}>{r}</RowHead>
                    {[...columns, 'T'].map((k) => (
                      <Cell
                        key={k}
                        $boxed={(k === 'A' || k === 'B') && r <= 20}
                        $fill={k === 'D' && r >= 2 && r <= 4}
                        $text={r === 1}
                        $edge={k === 'T'}
                      >
                        {valueAt(k, r)}
                        {k === 'F' && r === 3 && <Selection />}
                      </Cell>
                    ))}
                  </tr>
                ))}
              </tbody>
            </Grid>
            <Pointer width="19" height="28" viewBox="0 0 19 28" aria-hidden="true">
              <path d="M0.500 0.500v23l5.500-4.500 4 7.500 4-1.500-3.500-7.500h7.500z" fill="#fff" stroke="#222" />
            </Pointer>
          </GridBox>
          <VScroll>
            <ScrollButton aria-label="向上滚动"><Tri dir="u" /></ScrollButton>
            <VThumb />
            <VTrack />
            <ScrollButton aria-label="向下滚动"><Tri dir="d" /></ScrollButton>
          </VScroll>
        </SheetArea>

        <SheetBar>
          <SheetNav>
            <NavButton aria-label="上一张工作表"><Tri dir="l" color="#c4c4c4" /></NavButton>
            <NavButton aria-label="下一张工作表"><Tri dir="r" color="#c4c4c4" /></NavButton>
          </SheetNav>
          <SheetTab>Sheet1</SheetTab>
          <AddSheet aria-label="新工作表"><Svg w={24} h={24}><circle cx="12" cy="12" r="10.500" stroke="#777" strokeWidth="1.500" /><path d="M7 12h10M12 7v10" stroke="#777" strokeWidth="2" /></Svg></AddSheet>
          <HScroll>
            <Grip $margin="0 14px 0 0"><i /></Grip>
            <ScrollButton aria-label="向左滚动"><Tri dir="l" /></ScrollButton>
            <HThumb />
            <HTrack />
            <ScrollButton aria-label="向右滚动"><Tri dir="r" /></ScrollButton>
          </HScroll>
        </SheetBar>

        <StatusBar>
          <span>就绪</span>
          <MacroButton aria-label="录制宏"><Svg w={21} h={20}><path d="M2.500 4.500h17v14h-17z" stroke="#e8f7ec" /><path d="M8 1h12v4H8z" fill="#e8f7ec" /><path d="M5 8.500h13M5 11.500h13M5 14.500h13" stroke="#e8f7ec" strokeDasharray="4 1" /><circle cx="5" cy="4.500" r="4.500" fill="#e8f7ec" /></Svg></MacroButton>
          <Views>
            <ViewButton $on aria-label="普通"><Svg w={19} h={19}><path d="M0.500 0.500h18v18h-18zM0.500 6.500h18M0.500 12.500h18M6.500 0.500v18M12.500 0.500v18" stroke="#e8f7ec" /></Svg></ViewButton>
            <ViewButton aria-label="页面布局"><Svg w={19} h={19}><path d="M0.500 0.500h18v18h-18zM4.500 3.500h10v12h-10zM7 6.500h5M7 9.500h5M7 12.500h5" stroke="#e8f7ec" /></Svg></ViewButton>
            <ViewButton aria-label="分页预览"><Svg w={19} h={19}><path d="M0.500 0.500h18v18h-18z" stroke="#e8f7ec" /><path d="M0 0h6v11H0zM7 0h6v11H7z" fill="#e8f7ec" /></Svg></ViewButton>
          </Views>
          <ZoomButton aria-label="缩小"><Svg w={12} h={12}><path d="M0 6h12" stroke="#e8f7ec" strokeWidth="3" /></Svg></ZoomButton>
          <ZoomRange type="range" min={0} max={200} defaultValue={100} aria-label="显示比例" />
          <ZoomButton aria-label="放大"><Svg w={14} h={14}><path d="M0 7h14M7 0v14" stroke="#e8f7ec" strokeWidth="3" /></Svg></ZoomButton>
          <ZoomValue>100%</ZoomValue>
        </StatusBar>
      </Window>
    </Screen>
  );
}
